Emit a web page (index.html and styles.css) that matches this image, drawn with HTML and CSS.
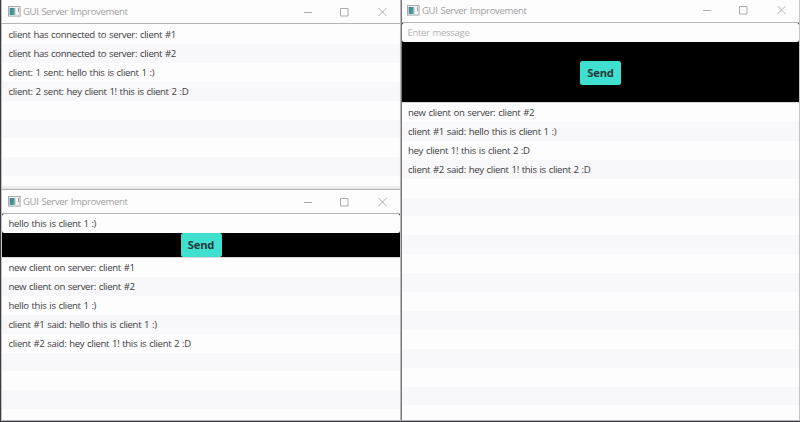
FILE: index.html
```
<!DOCTYPE html>
<html lang="en">
<head>
<meta charset="utf-8">
<title>GUI Server Improvement</title>
<link rel="stylesheet" href="styles.css">
</head>
<body>
<svg class="defs" aria-hidden="true">
  <defs>
    <linearGradient id="teal" x1="0" y1="0" x2="1" y2="1"><stop offset="0" stop-color="#4f7c94"/><stop offset="1" stop-color="#43a397"/></linearGradient>
    <symbol id="app" viewBox="0 0 13 11"><rect x=".5" y=".5" width="11.6" height="9.6" fill="#f2f5f4" stroke="#a6aaa9"/><rect x="1.6" y="2" width="5" height="7" fill="url(#teal)"/><path d="M7.5 2v7" stroke="#c9dedb"/><path d="M10.5 2v4" stroke="#8e9a9e"/></symbol>
    <symbol id="controls" viewBox="0 0 84 10"><path d="M0 5.5h8M36.5 1.5h7.5v7.5h-7.5zM74.5 1l8 8M82.5 1l-8 8" fill="none" stroke="#a3a3a3" stroke-width=".9"/></symbol>
  </defs>
</svg>
<main class="desktop">
  <div class="left">
    <section class="window server">
      <header class="titlebar"><svg class="app-icon"><use href="#app"/></svg><h1 class="title">GUI Server Improvement</h1><svg class="controls"><use href="#controls"/></svg></header>
      <ul class="list">
        <li>client has connected to server: client #1</li>
        <li>client has connected to server: client #2</li>
        <li>client: 1 sent: hello this is client 1 :)</li>
        <li>client: 2 sent: hey client 1! this is client 2 :D</li>
      </ul>
    </section>
    <section class="window client-one">
      <header class="titlebar"><svg class="app-icon"><use href="#app"/></svg><h1 class="title">GUI Server Improvement</h1><svg class="controls"><use href="#controls"/></svg></header>
      <div class="field">hello this is client 1 :)</div>
      <div class="bar"><button class="send">Send</button></div>
      <ul class="list">
        <li>new client on server: client #1</li>
        <li>new client on server: client #2</li>
        <li>hello this is client 1 :)</li>
        <li>client #1 said: hello this is client 1 :)</li>
        <li>client #2 said: hey client 1! this is client 2 :D</li>
      </ul>
    </section>
  </div>
  <section class="window client-two">
    <header class="titlebar"><svg class="app-icon"><use href="#app"/></svg><h1 class="title">GUI Server Improvement</h1><svg class="controls"><use href="#controls"/></svg></header>
    <div class="field placeholder">Enter message</div>
    <div class="bar"><button class="send">Send</button></div>
    <ul class="list">
      <li>new client on server: client #2</li>
      <li>client #1 said: hello this is client 1 :)</li>
      <li>hey client 1! this is client 2 :D</li>
      <li>client #2 said: hey client 1! this is client 2 :D</li>
    </ul>
  </section>
</main>
</body>
</html>
```
FILE: styles.css
```
* { box-sizing: border-box; }
body { margin: 0; background: #3b3a3e; font-family: "Open Sans", "Noto Sans", sans-serif; font-size: 9.6px; letter-spacing: -.34px; word-spacing: .7px; color: #3c3c3e; }
.defs { position: absolute; width: 0; height: 0; }
.desktop { display: grid; grid-template-columns: 400px 399px; width: 800px; height: 422px; padding: 0 0 1px 1px; overflow: hidden; }
.left { display: grid; grid-template-rows: 190px 231px; }
.window { display: flex; flex-direction: column; min-height: 0; overflow: hidden; background: #fefdfe; border-left: 1px solid #c4c4c6; border-bottom: 1px solid #b4b4b6; }
.left .window { border-right: 1px solid #bababc; }
.client-two { border-left-color: #767678; border-right: 1px solid #c4c4c6; }
.titlebar { display: flex; align-items: center; flex: none; height: 24px; padding: 0 13px 0 6px; border-bottom: 1px solid #b5b4b6; background: #fefdfe; }
.client-two .titlebar { height: 23px; padding: 0 12px 2px 5px; }
.app-icon { width: 13px; height: 11px; margin-right: 2px; }
.title { flex: 1; margin: 0; font-size: 9.6px; font-weight: 400; letter-spacing: -.36px; color: #a09fa1; }
.left .controls { margin-right: -1px; }
.controls { width: 84px; height: 10px; }
.field { display: flex; align-items: center; flex: none; height: 19px; padding-left: 6.5px; border-radius: 2px; background: #fefdfe; }
.placeholder { padding-left: 5.5px; color: #b3b2b4; letter-spacing: -.35px; }
.client-one, .client-two { background: #000; }
.bar { display: flex; align-items: center; justify-content: center; flex: none; height: 24px; background: #000; }
.client-two .bar { height: 60px; padding-top: 2px; }
.send { width: 41px; height: 24px; padding: 0; border: 0; border-radius: 2.5px; background: #40e0d0; color: #24383a; font: 700 11.2px/24px "Open Sans", sans-serif; letter-spacing: -.15px; }
.list { flex: 1; min-height: 0; margin: 0; padding: 0; list-style: none; border-top: 1px solid #d8d8da; background: repeating-linear-gradient(#fefdfe 0 18.9px, #f8f7f9 18.9px 37.8px); }
.server .list { flex: none; height: 165px; border-top-color: #fefdfe; box-shadow: inset 0 -4px 4px -3px #d2d1d3; }
.list li { height: 18.9px; padding-left: 6.5px; line-height: 19.5px; white-space: nowrap; }
.client-two .list li { padding-left: 6px; line-height: 20.5px; }
```
